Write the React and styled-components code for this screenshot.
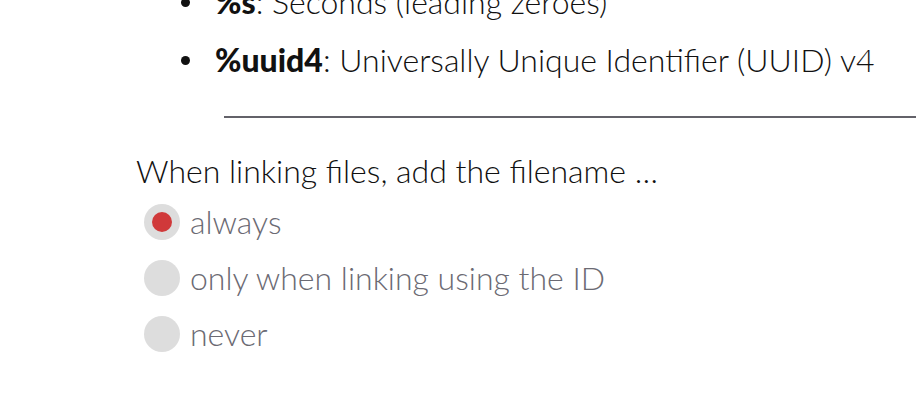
import React from "react";
import styled, { createGlobalStyle } from "styled-components";

const GlobalStyle = createGlobalStyle`
  html, body {
    margin: 0;
    padding: 0;
    background: #ffffff;
    overflow: hidden;
  }
  body {
    font-family: Lato, "Open Sans", sans-serif;
    font-weight: 300;
    color: #111111;
  }
`;

const Page = styled.div`
  width: 916px;
  height: 414px;
  overflow: hidden;
  padding-left: 136px;
  box-sizing: border-box;
`;

const List = styled.ul`
  margin: -27px 0 0 0;
  padding: 0 0 0 45px;
  font-size: 32px;
  line-height: 58px;
  list-style: none;
  white-space: nowrap;
`;

const Item = styled.li`
  display: flex;
  align-items: center;

  &::before {
    content: "";
    width: 9px;
    height: 9px;
    border-radius: 50%;
    background: #111111;
    margin-right: 25px;
    flex-shrink: 0;
  }
`;

const Code = styled.strong`
  font-weight: 900;
`;

const Rule = styled.hr`
  margin: 27px 0 0 88px;
  width: 900px;
  border: none;
  height: 2px;
  background: #636269;
`;

const Question = styled.p`
  margin: 33px 0 0 0;
  font-size: 32px;
  line-height: 40px;
  color: #111111;
`;

const Options = styled.div`
  display: flex;
  flex-direction: column;
  gap: 20px;
  margin-top: 13px;
  padding-left: 8px;
`;

const Option = styled.label`
  display: flex;
  align-items: center;
  gap: 10px;
  font-size: 32px;
  line-height: 36px;
  color: #6b6a73;
`;

const Radio = styled.span`
  width: 36px;
  height: 36px;
  border-radius: 50%;
  background: #dddddd;
  display: flex;
  align-items: center;
  justify-content: center;
  flex-shrink: 0;

  &::after {
    content: "";
    width: 20px;
    height: 20px;
    border-radius: 50%;
    background: ${(p) => (p.checked ? "#d0393a" : "transparent")};
  }
`;

const options = [
  { label: "always", checked: true },
  { label: "only when linking using the ID" },
  { label: "never" },
];

export default function App() {
  return (
    <Page>
      <GlobalStyle />
      <List>
        <Item>
          <span>
            <Code>%s</Code>: Seconds (leading zeroes)
          </span>
        </Item>
        <Item>
          <span>
            <Code>%uuid4</Code>: Universally Unique Identifier (UUID) v4
          </span>
        </Item>
      </List>
      <Rule />
      <Question>When linking files, add the filename …</Question>
      <Options>
        {options.map((o) => (
          <Option key={o.label}>
            <Radio checked={o.checked} />
            {o.label}
          </Option>
        ))}
      </Options>
    </Page>
  );
}
